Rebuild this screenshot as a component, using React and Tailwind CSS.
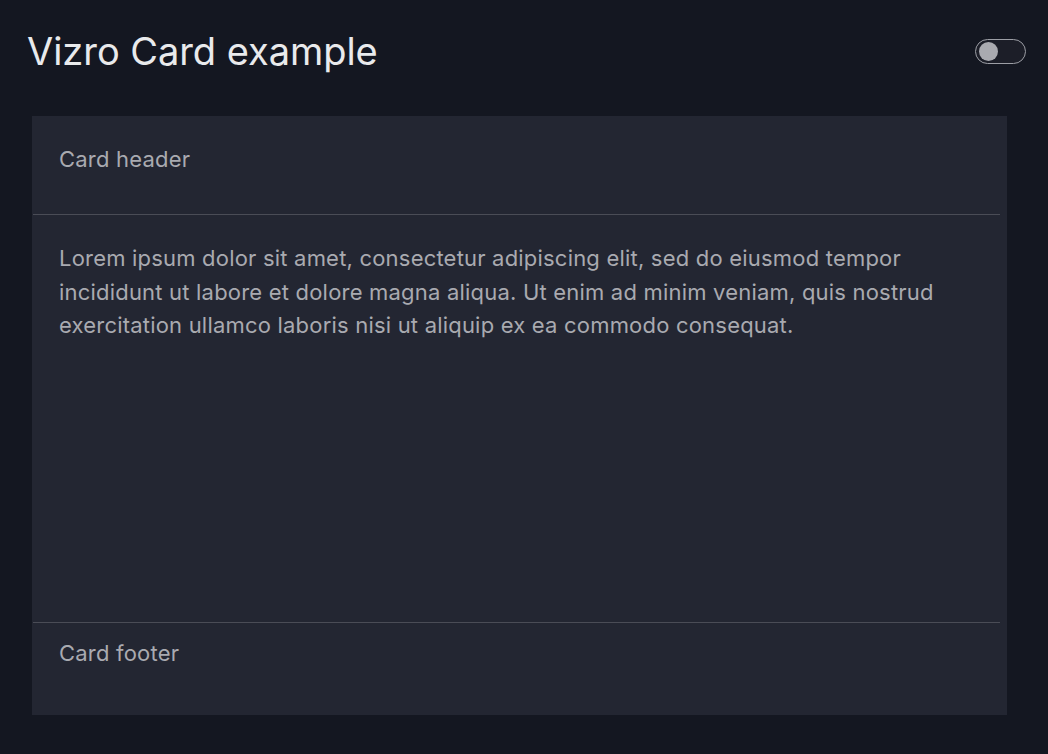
export default function App() {
  return (
    <div className="w-[1048px] h-[754px] bg-[#141721] overflow-hidden" style={{ fontFamily: "Inter, 'Noto Sans', sans-serif" }}>
      <div className="flex items-start justify-between pl-[27px] pr-[22px] pt-[25px]">
        <h1 className="text-[38px] leading-[52px] text-[#e9eaec] tracking-[-0.05px]">Vizro Card example</h1>
        <div className="mt-[14px] w-[51px] h-[25px] rounded-full border border-[#9c9ea5] bg-[#1c1e28] flex items-center pl-[3px]">
          <div className="w-[19px] h-[19px] rounded-full bg-[#a9aab0]"></div>
        </div>
      </div>
      <div className="ml-[32px] mt-[39px] w-[975px] h-[599px] bg-[#232632] flex flex-col">
        <div className="h-[99px] ml-px mr-[7px] border-b border-[#4a4c56] pl-[26px] pt-[27px] text-[22px] leading-[33px] text-[#a9aab0] tracking-[0.2px]">Card header</div>
        <div className="flex-1 ml-px mr-[7px] border-b border-[#4a4c56] pl-[26px] pr-[40px] pt-[27px] text-[22px] leading-[33.5px] text-[#a9aab0] tracking-[0.2px]">
          Lorem ipsum dolor sit amet, consectetur adipiscing elit, sed do eiusmod tempor incididunt ut labore et dolore magna aliqua. Ut enim ad minim veniam, quis nostrud exercitation ullamco laboris nisi ut aliquip ex ea commodo consequat.
        </div>
        <div className="h-[92px] ml-px mr-[7px] pl-[26px] pt-[14px] text-[22px] leading-[33px] text-[#a9aab0] tracking-[0.2px]">Card footer</div>
      </div>
    </div>
  );
}
